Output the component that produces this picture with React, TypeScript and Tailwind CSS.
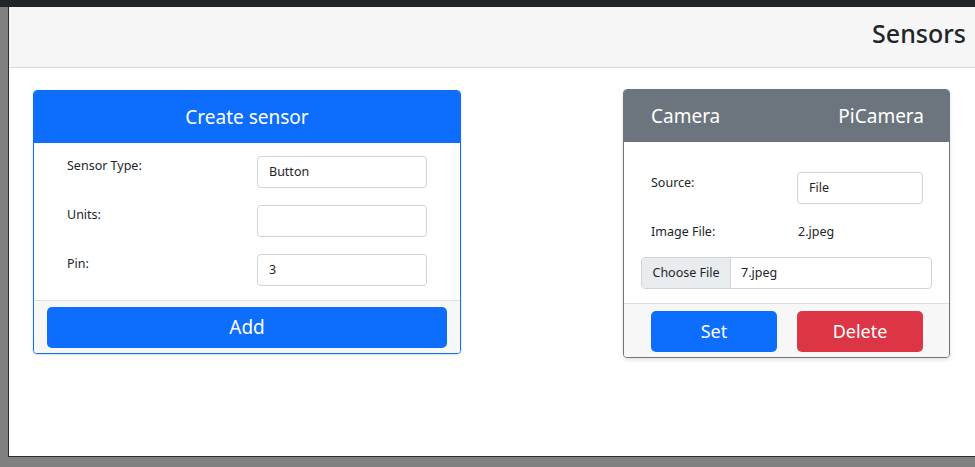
import React from 'react'

const font = { fontFamily: '"Noto Sans", "Open Sans", Arial, sans-serif' }

function Field({ label, value }: { label: string; value: string }) {
  return (
    <div className="flex items-start">
      <label className="w-[190px] pt-[1px] text-[12.5px] text-[#212529]">{label}</label>
      <div className="w-[170px] h-[32px] border border-[#ced4da] rounded-[4px] px-[11px] flex items-center text-[12.5px] text-[#212529]">
        {value}
      </div>
    </div>
  )
}

function CreateSensorCard() {
  return (
    <div className="w-[428px] h-[264px] border border-[#0d6efd] rounded-[4px] overflow-hidden shadow-sm bg-white flex flex-col">
      <div className="h-[52px] bg-[#0d6efd] text-white text-[19px] flex items-center justify-center">
        Create sensor
      </div>
      <div className="flex-1 pl-[33px] pt-[13px] flex flex-col gap-[17px]">
        <Field label="Sensor Type:" value="Button" />
        <Field label="Units:" value="" />
        <Field label="Pin:" value="3" />
      </div>
      <div className="border-t border-[#dfdfdf] bg-[#f7f7f7] px-[13px] pt-[6px] pb-[5px]">
        <button className="w-full h-[41px] rounded-[5px] bg-[#0d6efd] text-white text-[19px]">Add</button>
      </div>
    </div>
  )
}

function CameraCard() {
  return (
    <div className="w-[327px] h-[269px] border border-[#6c757d] rounded-[4px] overflow-hidden shadow-[0_2px_4px_rgba(0,0,0,0.12)] bg-white flex flex-col">
      <div className="h-[52px] bg-[#6c757d] text-white text-[19px] flex items-center justify-between pl-[27px] pr-[25px]">
        <span>Camera</span>
        <span>PiCamera</span>
      </div>
      <div className="flex-1 flex flex-col pt-[30px]">
        <div className="flex items-start pl-[27px]">
          <span className="w-[146px] pt-[2px] text-[12.5px] text-[#212529]">Source:</span>
          <div className="w-[126px] h-[32px] border border-[#ced4da] rounded-[4px] px-[11px] flex items-center text-[12.5px] text-[#212529]">
            File
          </div>
        </div>
        <div className="flex items-center pl-[27px] mt-[18px] h-[20px]">
          <span className="w-[147px] text-[12.5px] text-[#212529]">Image File:</span>
          <span className="text-[12.5px] text-[#212529]">2.jpeg</span>
        </div>
        <div className="mx-[17px] mt-[15px] h-[32px] border border-[#ced4da] rounded-[4px] flex overflow-hidden text-[12.5px] text-[#212529]">
          <div className="w-[89px] bg-[#e9ecef] border-r border-[#ced4da] flex items-center justify-center">
            Choose File
          </div>
          <div className="flex items-center pl-[10px]">7.jpeg</div>
        </div>
      </div>
      <div className="border-t border-[#dfdfdf] bg-[#f7f7f7] pl-[27px] pt-[7px] pb-[5px] flex gap-[20px]">
        <button className="w-[126px] h-[41px] rounded-[5px] bg-[#0d6efd] text-white text-[18px]">Set</button>
        <button className="w-[126px] h-[41px] rounded-[5px] bg-[#dc3545] text-white text-[18px]">Delete</button>
      </div>
    </div>
  )
}

export default function App() {
  return (
    <div className="h-[467px] w-[975px] flex flex-col bg-[#808080] overflow-hidden" style={font}>
      <div className="h-[7px] bg-[#212529]" />
      <div className="flex flex-1">
        <div className="w-[8px] bg-[#808080]" />
        <div className="flex-1 bg-white border-l border-b border-[#2c2c2c] flex flex-col">
          <header className="h-[61px] bg-[#f6f6f6] border-b border-[#dcdcdc] flex items-center justify-end pr-[9px] pb-[8px]">
            <h3 className="text-[25px] font-medium text-[#212529] leading-none">Sensors</h3>
          </header>
          <main className="flex items-start pl-[24px] pt-[22px]">
            <CreateSensorCard />
            <div className="ml-[162px] -mt-[1px]">
              <CameraCard />
            </div>
          </main>
        </div>
      </div>
      <div className="h-[10px]" />
    </div>
  )
}
